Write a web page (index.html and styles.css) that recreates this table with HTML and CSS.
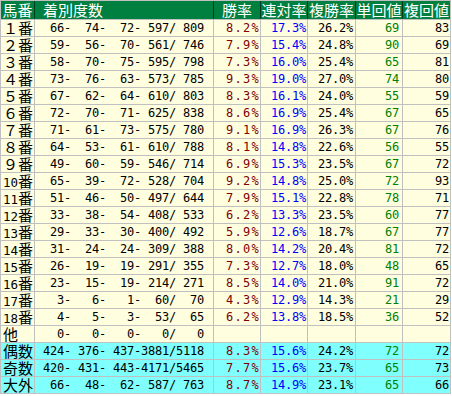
FILE: index.html
```html
<!DOCTYPE html>
<html lang="ja">
<head>
<meta charset="utf-8">
<link rel="stylesheet" href="styles.css">
</head>
<body>
<table class="tbl">
<colgroup>
<col class="c1"><col class="c2"><col class="c3"><col class="c4"><col class="c5"><col class="c6"><col class="c7">
</colgroup>
<thead>
<tr><th>馬番</th><th class="hl">着別度数</th><th>勝率</th><th>連対率</th><th>複勝率</th><th>単回値</th><th>複回値</th></tr>
</thead>
<tbody>
<tr><td class="lbl">１番</td><td class="cnt">  66-  74-  72- 597/ 809</td><td class="win">8.2%</td><td class="ren">17.3%</td><td class="fuk">26.2%</td><td class="tan">69</td><td class="fkv">83</td></tr>
<tr><td class="lbl">２番</td><td class="cnt">  59-  56-  70- 561/ 746</td><td class="win">7.9%</td><td class="ren">15.4%</td><td class="fuk">24.8%</td><td class="tan">90</td><td class="fkv">69</td></tr>
<tr><td class="lbl">３番</td><td class="cnt">  58-  70-  75- 595/ 798</td><td class="win">7.3%</td><td class="ren">16.0%</td><td class="fuk">25.4%</td><td class="tan">65</td><td class="fkv">81</td></tr>
<tr><td class="lbl">４番</td><td class="cnt">  73-  76-  63- 573/ 785</td><td class="win">9.3%</td><td class="ren">19.0%</td><td class="fuk">27.0%</td><td class="tan">74</td><td class="fkv">80</td></tr>
<tr><td class="lbl">５番</td><td class="cnt">  67-  62-  64- 610/ 803</td><td class="win">8.3%</td><td class="ren">16.1%</td><td class="fuk">24.0%</td><td class="tan">55</td><td class="fkv">59</td></tr>
<tr><td class="lbl">６番</td><td class="cnt">  72-  70-  71- 625/ 838</td><td class="win">8.6%</td><td class="ren">16.9%</td><td class="fuk">25.4%</td><td class="tan">67</td><td class="fkv">65</td></tr>
<tr><td class="lbl">７番</td><td class="cnt">  71-  61-  73- 575/ 780</td><td class="win">9.1%</td><td class="ren">16.9%</td><td class="fuk">26.3%</td><td class="tan">67</td><td class="fkv">76</td></tr>
<tr><td class="lbl">８番</td><td class="cnt">  64-  53-  61- 610/ 788</td><td class="win">8.1%</td><td class="ren">14.8%</td><td class="fuk">22.6%</td><td class="tan">56</td><td class="fkv">55</td></tr>
<tr><td class="lbl">９番</td><td class="cnt">  49-  60-  59- 546/ 714</td><td class="win">6.9%</td><td class="ren">15.3%</td><td class="fuk">23.5%</td><td class="tan">67</td><td class="fkv">72</td></tr>
<tr><td class="lbl"><span class="d">10</span>番</td><td class="cnt">  65-  39-  72- 528/ 704</td><td class="win">9.2%</td><td class="ren">14.8%</td><td class="fuk">25.0%</td><td class="tan">72</td><td class="fkv">93</td></tr>
<tr><td class="lbl"><span class="d">11</span>番</td><td class="cnt">  51-  46-  50- 497/ 644</td><td class="win">7.9%</td><td class="ren">15.1%</td><td class="fuk">22.8%</td><td class="tan">78</td><td class="fkv">71</td></tr>
<tr><td class="lbl"><span class="d">12</span>番</td><td class="cnt">  33-  38-  54- 408/ 533</td><td class="win">6.2%</td><td class="ren">13.3%</td><td class="fuk">23.5%</td><td class="tan">60</td><td class="fkv">77</td></tr>
<tr><td class="lbl"><span class="d">13</span>番</td><td class="cnt">  29-  33-  30- 400/ 492</td><td class="win">5.9%</td><td class="ren">12.6%</td><td class="fuk">18.7%</td><td class="tan">67</td><td class="fkv">77</td></tr>
<tr><td class="lbl"><span class="d">14</span>番</td><td class="cnt">  31-  24-  24- 309/ 388</td><td class="win">8.0%</td><td class="ren">14.2%</td><td class="fuk">20.4%</td><td class="tan">81</td><td class="fkv">72</td></tr>
<tr><td class="lbl"><span class="d">15</span>番</td><td class="cnt">  26-  19-  19- 291/ 355</td><td class="win">7.3%</td><td class="ren">12.7%</td><td class="fuk">18.0%</td><td class="tan">48</td><td class="fkv">65</td></tr>
<tr><td class="lbl"><span class="d">16</span>番</td><td class="cnt">  23-  15-  19- 214/ 271</td><td class="win">8.5%</td><td class="ren">14.0%</td><td class="fuk">21.0%</td><td class="tan">91</td><td class="fkv">72</td></tr>
<tr><td class="lbl"><span class="d">17</span>番</td><td class="cnt">   3-   6-   1-  60/  70</td><td class="win">4.3%</td><td class="ren">12.9%</td><td class="fuk">14.3%</td><td class="tan">21</td><td class="fkv">29</td></tr>
<tr><td class="lbl"><span class="d">18</span>番</td><td class="cnt">   4-   5-   3-  53/  65</td><td class="win">6.2%</td><td class="ren">13.8%</td><td class="fuk">18.5%</td><td class="tan">36</td><td class="fkv">52</td></tr>
<tr><td class="lbl">他</td><td class="cnt">   0-   0-   0-   0/   0</td><td class="win"></td><td class="ren"></td><td class="fuk"></td><td class="tan"></td><td class="fkv"></td></tr>
<tr class="sum"><td class="lbl">偶数</td><td class="cnt"> 424- 376- 437-3881/5118</td><td class="win">8.3%</td><td class="ren">15.6%</td><td class="fuk">24.2%</td><td class="tan">72</td><td class="fkv">72</td></tr>
<tr class="sum"><td class="lbl">奇数</td><td class="cnt"> 420- 431- 443-4171/5465</td><td class="win">7.7%</td><td class="ren">15.6%</td><td class="fuk">23.7%</td><td class="tan">65</td><td class="fkv">73</td></tr>
<tr class="sum"><td class="lbl">大外</td><td class="cnt">  66-  48-  62- 587/ 763</td><td class="win">8.7%</td><td class="ren">14.9%</td><td class="fuk">23.1%</td><td class="tan">65</td><td class="fkv">66</td></tr>
</tbody>
</table>
</body>
</html>
```

FILE: styles.css
```css
html, body {
  margin: 0;
  padding: 0;
  background: #ffffff;
}

.tbl {
  border-collapse: separate;
  border-spacing: 1px;
  background: #c0c0c0;
  table-layout: fixed;
  width: 451px;
}

.c1 { width: 33px; }
.c2 { width: 178px; }
.c3 { width: 46px; }
.c4 { width: 46px; }
.c5 { width: 47px; }
.c6 { width: 46px; }
.c7 { width: 47px; }

.tbl th {
  background: #008040;
  color: #ffffff;
  font-family: "Noto Sans CJK JP", sans-serif;
  font-size: 15px;
  font-weight: normal;
  line-height: 16px;
  height: 18px;
  padding: 0;
  text-align: center;
  vertical-align: middle;
  white-space: nowrap;
  overflow: hidden;
  box-shadow: -1px 0 0 #003a1d;
}

.tbl th:first-child {
  box-shadow: none;
}

.tbl th.hl {
  text-align: left;
  padding-left: 8px;
}

.tbl td {
  background: #ffffe0;
  height: 16px;
  line-height: 14px;
  padding: 0;
  font-family: "DejaVu Sans Mono", monospace;
  font-size: 12px;
  letter-spacing: -0.22px;
  text-align: right;
  vertical-align: middle;
  white-space: pre;
  overflow: hidden;
}

.tbl tr.sum td {
  background: #80ffff;
}

.tbl td.lbl {
  font-family: "Noto Sans CJK JP", sans-serif;
  font-size: 15px;
  line-height: 14px;
  letter-spacing: 0;
  text-align: left;
  padding-left: 2px;
  color: #000000;
}

.d {
  font-family: "DejaVu Sans Mono", monospace;
  font-size: 12.5px;
  line-height: 12px;
}

.cnt {
  color: #000000;
  padding-right: 9px !important;
}

.win {
  color: #800000;
  letter-spacing: 1.3px !important;
  padding-right: 0 !important;
}

.ren {
  color: #0000ff;
  padding-right: 1px !important;
}

.fuk {
  color: #000000;
  padding-right: 2px !important;
}

.tan {
  color: #008000;
  padding-right: 3px !important;
}

.fkv {
  color: #000000;
  padding-right: 1px !important;
}
```
